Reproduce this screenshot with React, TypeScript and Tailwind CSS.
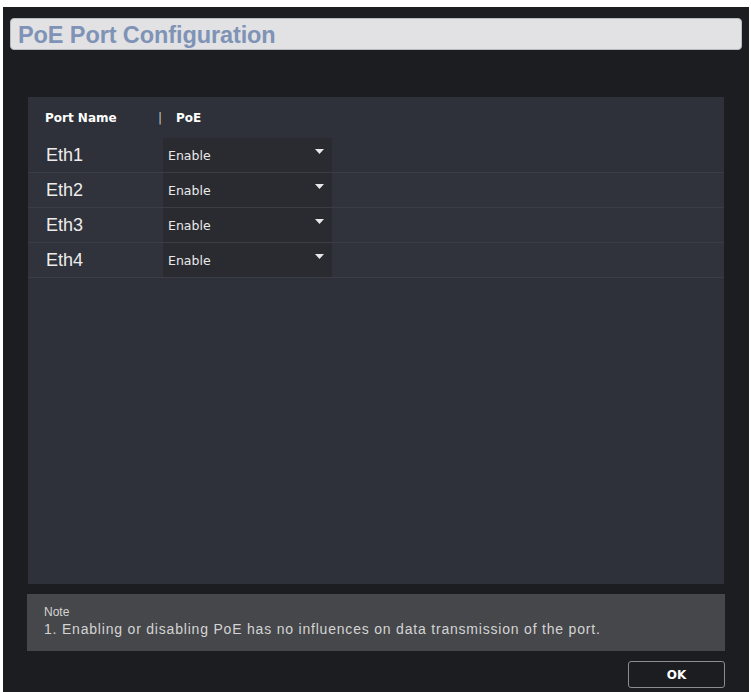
import React from "react";

const ports = ["Eth1", "Eth2", "Eth3", "Eth4"];

function Caret() {
  return (
    <svg width="9" height="6" viewBox="0 0 9 6" className="block">
      <path d="M0 0 L9 0 L4.5 5 Z" fill="#e8e8e8" />
    </svg>
  );
}

export default function App() {
  return (
    <div className="w-[751px] h-[692px] bg-white pt-[7px] pl-[3px] pr-[2px] font-['Liberation_Sans',Arial,sans-serif]">
      <div className="h-[685px] bg-[#1c1d20] pt-[11px] px-[7px] flex flex-col">
        <div className="h-[32px] rounded-[4px] bg-[#e2e2e4] border border-[#b9babd] flex items-center pl-[7px] pt-[3px]">
          <span className="text-[23.5px] font-bold text-[#7e93b6] tracking-[-0.1px] leading-none">PoE Port Configuration</span>
        </div>
        <div className="mt-[47px] mx-[18px] h-[487px] bg-[#2e3139] pt-[8px] flex flex-col">
          <div className="h-[25px] flex items-center text-[12px] font-bold text-white font-['DejaVu_Sans',sans-serif]">
            <span className="pl-[17px] w-[130px]">Port Name</span>
            <span className="text-[#c8c8c8] font-normal w-[18px]">|</span>
            <span>PoE</span>
          </div>
          <div className="mt-[8px] flex flex-col">
            {ports.map((p, i) => (
              <div
                key={p}
                className={
                  "h-[35px] flex items-center border-b border-[#3a3d45] " +
                  (i === 0 ? "" : "bg-[#30333b]")
                }
              >
                <span className="w-[135px] pl-[18px] text-[18px] text-[#ececec]">{p}</span>
                <div className="h-full w-[169px] bg-[#292b31] flex items-center justify-between pl-[5px] pr-[8px]">
                  <span className="text-[12.5px] text-[#eaeaea] pt-[3px] font-['DejaVu_Sans',sans-serif]">Enable</span>
                  <div className="-mt-[6px]">
                    <Caret />
                  </div>
                </div>
              </div>
            ))}
          </div>
        </div>
        <div className="mt-[10px] mx-[17px] h-[57px] bg-[#46474a] px-[17px] pt-[10px] text-[#d4d4d4] leading-[17px]">
          <div className="text-[12px]">Note</div>
          <div className="text-[14px] tracking-[0.8px] whitespace-nowrap">1. Enabling or disabling PoE has no influences on data transmission of the port.</div>
        </div>
        <div className="mt-[10px] mr-[17px] flex justify-end">
          <div className="w-[97px] h-[27px] border border-[#8b8c8f] rounded-[3px] flex items-center justify-center text-[12px] font-bold text-white font-['DejaVu_Sans',sans-serif]">
            OK
          </div>
        </div>
      </div>
    </div>
  );
}
